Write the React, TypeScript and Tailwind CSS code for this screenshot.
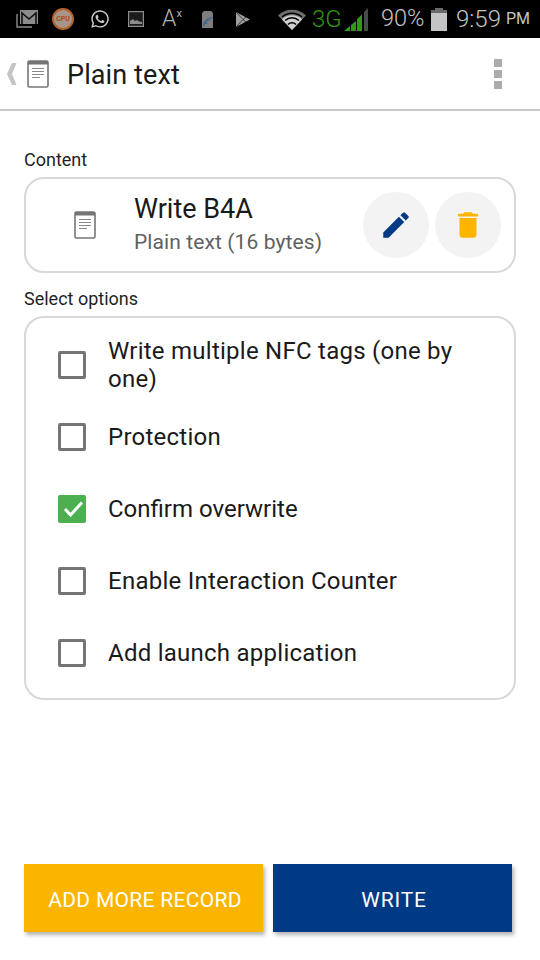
import { MdDelete, MdEdit } from "react-icons/md";
import { FaWhatsapp } from "react-icons/fa";

const font = "font-['Roboto',sans-serif]";

function DocIcon({ className }: { className: string }) {
  return (
    <svg viewBox="0 0 22 28" className={className}>
      <rect x="1" y="1" width="20" height="26" rx="1.5" fill="#fff" stroke="#757575" strokeWidth="1.6" />
      <rect x="1" y="1" width="20" height="3.5" fill="#757575" />
      <path d="M5 8.500h12M5 11.500h12M5 14.500h12M5 17.500h8" stroke="#8a8a8a" strokeWidth="1.2" />
    </svg>
  );
}

function StatusBar() {
  return (
    <div className={`flex h-[38px] shrink-0 items-center bg-black text-[#c4c4c4] ${font}`}>
      <div className="ml-[16px] flex items-center">
        {/* gmail */}
        <svg viewBox="0 0 23 20" className="h-[20px] w-[23px]">
          <path d="M1 5v13h15" fill="none" stroke="#8c8c8c" strokeWidth="1.4" />
          <rect x="4" y="1" width="18" height="14" fill="#8c8c8c" />
          <path d="M6 15V4l7 6 7-6v11" fill="none" stroke="#111" strokeWidth="1.6" />
        </svg>
        {/* cpu */}
        <div className="ml-[13px] flex h-[22px] w-[22px] items-center justify-center rounded-full border-2 border-[#b5642a] bg-[#a89488] text-[7px] font-bold text-[#b8451c]">
          CPU
        </div>
        <FaWhatsapp className="ml-[16px] text-[#c9c9c9]" size={20} />
        {/* picture */}
        <svg viewBox="0 0 16 16" className="ml-[18px] h-[16px] w-[16px]">
          <rect x="0.6" y="0.6" width="14.8" height="14.8" fill="#1c1c1c" stroke="#8c8c8c" strokeWidth="1.2" />
          <path d="M2 13V10l3-2 2 2 2-1 2 1.500 3 .5v2z" fill="#8c8c8c" />
        </svg>
        <div className="ml-[18px] flex w-[20px] items-start text-[#b5b5b5]">
          <span className="text-[23px] leading-[22px] font-light">A</span>
          <span className="text-[11px] leading-[11px] font-normal">x</span>
        </div>
        {/* sd card */}
        <svg viewBox="0 0 13 19" className="ml-[19px] h-[19px] w-[13px]">
          <path d="M1 3l2-2h7l2 2v15H1z" fill="#7d7d7d" />
          <path d="M2.500 15.500a10 10 0 0 1 9-8M2.500 15.500a7 7 0 0 1 7-5.500M2.500 15.500a4 4 0 0 1 4-2.500" fill="none" stroke="#35608f" strokeWidth="1.2" />
        </svg>
        {/* play store */}
        <svg viewBox="0 0 16 17" className="ml-[21px] h-[17px] w-[16px]">
          <path d="M1 1l14 7.500L1 16z" fill="#a0a0a0" />
          <path d="M1 1l7 7.500L1 16M8 8.500l3-2.500M8 8.500l3 2.500" fill="none" stroke="#111" strokeWidth="0.7" />
        </svg>
      </div>
      <div className="ml-[27px] flex items-center">
        {/* wifi */}
        <svg viewBox="0 0 28 21" className="h-[21px] w-[28px]">
          <path d="M14 21L0 6.500A20 20 0 0 1 28 6.500z" fill="#6f6f6f" />
          <path d="M14 21L4 10.500A14 14 0 0 1 24 10.500z" fill="#d0d0d0" />
          <path d="M7 11.500a10 10 0 0 1 14 0" fill="none" stroke="#000" strokeWidth="1.5" />
          <path d="M4 8a15 15 0 0 1 20 0" fill="none" stroke="#000" strokeWidth="1.5" />
          <path d="M10 15.500a5.500 5.500 0 0 1 8 0" fill="none" stroke="#000" strokeWidth="1.5" />
        </svg>
        <span className="ml-[6px] w-[28px] text-[24px] leading-none font-light text-[#2f9a12]">3G</span>
        {/* signal */}
        <svg viewBox="0 0 24 23" className="ml-[4px] h-[23px] w-[24px]">
          <path d="M0 23l6-5v5zM7 23v-6l5-4v10zM13 23V11l5-4.500V23z" fill="#2f9a12" />
          <path d="M20 23V4l4-4v23z" fill="#4a4a4a" />
        </svg>
        <span className="ml-[13px] w-[43px] text-[23.5px] leading-none font-light">90%</span>
        {/* battery */}
        <svg viewBox="0 0 16 23" className="ml-[7px] h-[23px] w-[16px]">
          <rect x="4" y="0" width="8" height="3" fill="#6a6a6a" />
          <rect x="0" y="2" width="16" height="3" fill="#6a6a6a" />
          <rect x="0" y="5" width="16" height="18" fill="#c4c4c4" />
        </svg>
        <span className="ml-[9px] w-[44px] text-[24px] leading-none font-light">9:59</span>
        <span className="ml-[6px] text-[16px] leading-none font-normal">PM</span>
      </div>
    </div>
  );
}

function Option({ label, checked }: { label: string; checked?: boolean }) {
  return (
    <div className="flex h-[72px] items-center">
      {checked ? (
        <div className="ml-[32px] flex h-[28px] w-[28px] shrink-0 items-center justify-center rounded-[2px] bg-[#4caf50]">
          <svg viewBox="0 0 28 28" className="h-[28px] w-[28px]">
            <path d="M7 14l5.500 6L24 7.500" fill="none" stroke="#fff" strokeWidth="3" />
          </svg>
        </div>
      ) : (
        <div className="ml-[32px] h-[28px] w-[28px] shrink-0 rounded-[2px] border-[3px] border-[#757575]" />
      )}
      <span
        className={`ml-[22px] w-[370px] text-[24px] leading-[28px] text-[#1a1a1a] ${
          checked ? "tracking-normal" : "tracking-[0.25px]"
        }`}
      >
        {label}
      </span>
    </div>
  );
}

export default function App() {
  return (
    <div className={`flex h-[960px] w-[540px] flex-col overflow-hidden bg-white ${font}`}>
      <StatusBar />

      <header className="flex h-[73px] shrink-0 items-center border-b-2 border-[#c8c8c8]">
        <svg viewBox="0 0 11 24" className="ml-[6px] h-[24px] w-[11px]">
          <path d="M10.500 1L6 12l4.500 11H6L1 12 6 1z" fill="#c4c4c4" />
        </svg>
        <DocIcon className="ml-[10px] h-[28px] w-[22px]" />
        <h1 className="mt-[4px] ml-[18px] text-[27px] leading-none font-normal tracking-[0.1px] text-[#1a1a1a]">Plain text</h1>
        <div className="mr-[38px] ml-auto flex flex-col gap-[3px]">
          <div className="h-[8px] w-[8px] bg-[#ababab]" />
          <div className="h-[8px] w-[8px] bg-[#ababab]" />
          <div className="h-[8px] w-[8px] bg-[#ababab]" />
        </div>
      </header>

      <main className="flex flex-1 flex-col px-[24px] pb-[28px]">
        <p className="mt-[38px] text-[18px] leading-[22px] text-[#1f1f1f]">Content</p>
        <section className="mt-[6px] flex h-[96px] items-center rounded-[20px] border-2 border-[#d8d8d8]">
          <DocIcon className="ml-[48px] h-[28px] w-[22px]" />
          <div className="-mt-[2px] ml-[38px]">
            <p className="text-[27px] leading-[30px] text-[#1a1a1a]">Write B4A</p>
            <p className="mt-[5px] text-[21px] leading-[26px] tracking-[0.1px] text-[#616161]">Plain text (16 bytes)</p>
          </div>
          <div className="mr-[13px] ml-auto flex gap-[6px]">
            <button className="flex h-[66px] w-[66px] items-center justify-center rounded-full bg-[#f3f3f3] text-[#003a85]">
              <MdEdit size={34} />
            </button>
            <button className="flex h-[66px] w-[66px] items-center justify-center rounded-full bg-[#f3f3f3] text-[#ffb400]">
              <MdDelete size={34} />
            </button>
          </div>
        </section>

        <p className="mt-[15px] text-[18px] leading-[22px] text-[#1f1f1f]">Select options</p>
        <section className="mt-[6px] h-[384px] rounded-[20px] border-2 border-[#d8d8d8] pt-[11px]">
          <Option label="Write multiple NFC tags (one by one)" />
          <Option label="Protection" />
          <Option label="Confirm overwrite" checked />
          <Option label="Enable Interaction Counter" />
          <Option label="Add launch application" />
        </section>

        <div className="mt-auto flex gap-[10px]">
          <button className="h-[68px] w-[239px] bg-[#fbb500] pt-[5px] pl-[3px] text-[21px] tracking-[0.3px] text-[#fff] shadow-[2px_3px_4px_rgba(0,0,0,0.3)]">
            ADD MORE RECORD
          </button>
          <button className="h-[68px] w-[239px] bg-[#003a85] pt-[5px] pl-[3px] text-[21px] tracking-[0.8px] text-[#fff] shadow-[2px_3px_4px_rgba(0,0,0,0.3)]">
            WRITE
          </button>
        </div>
      </main>
    </div>
  );
}
